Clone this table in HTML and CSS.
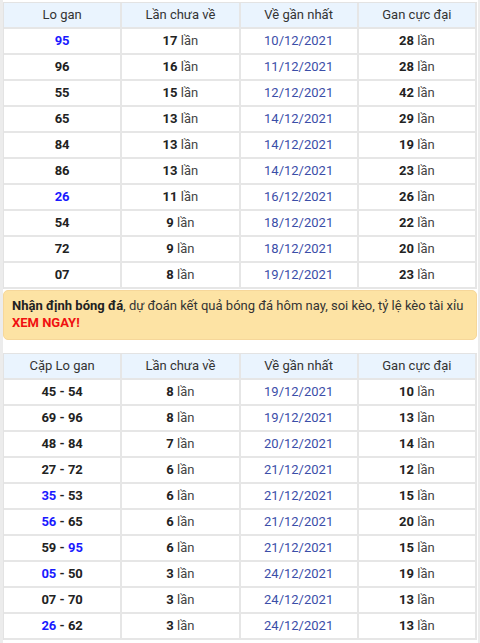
FILE: index.html
```html
<!DOCTYPE html>
<html lang="vi">
<head>
<meta charset="utf-8">
<link rel="stylesheet" href="styles.css">
</head>
<body>
<div class="wrap">
<table class="tbl">
<thead><tr><th>Lo gan</th><th>Lần chưa về</th><th>Về gần nhất</th><th>Gan cực đại</th></tr></thead>
<tbody>
<tr><td class="num blue">95</td><td><b>17</b> lần</td><td class="date">10/12/2021</td><td><b>28</b> lần</td></tr>
<tr><td class="num">96</td><td><b>16</b> lần</td><td class="date">11/12/2021</td><td><b>28</b> lần</td></tr>
<tr><td class="num">55</td><td><b>15</b> lần</td><td class="date">12/12/2021</td><td><b>42</b> lần</td></tr>
<tr><td class="num">65</td><td><b>13</b> lần</td><td class="date">14/12/2021</td><td><b>29</b> lần</td></tr>
<tr><td class="num">84</td><td><b>13</b> lần</td><td class="date">14/12/2021</td><td><b>19</b> lần</td></tr>
<tr><td class="num">86</td><td><b>13</b> lần</td><td class="date">14/12/2021</td><td><b>23</b> lần</td></tr>
<tr><td class="num blue">26</td><td><b>11</b> lần</td><td class="date">16/12/2021</td><td><b>26</b> lần</td></tr>
<tr><td class="num">54</td><td><b>9</b> lần</td><td class="date">18/12/2021</td><td><b>22</b> lần</td></tr>
<tr><td class="num">72</td><td><b>9</b> lần</td><td class="date">18/12/2021</td><td><b>20</b> lần</td></tr>
<tr><td class="num">07</td><td><b>8</b> lần</td><td class="date">19/12/2021</td><td><b>23</b> lần</td></tr>
</tbody>
</table>
<div class="banner"><b>Nhận định bóng đá</b>, dự đoán kết quả bóng đá hôm nay, soi kèo, tỷ lệ kèo tài xỉu <b class="red">XEM NGAY!</b></div>
<table class="tbl second">
<thead><tr><th>Cặp Lo gan</th><th>Lần chưa về</th><th>Về gần nhất</th><th>Gan cực đại</th></tr></thead>
<tbody>
<tr><td class="num">45 - 54</td><td><b>8</b> lần</td><td class="date">19/12/2021</td><td><b>10</b> lần</td></tr>
<tr><td class="num">69 - 96</td><td><b>8</b> lần</td><td class="date">19/12/2021</td><td><b>13</b> lần</td></tr>
<tr><td class="num">48 - 84</td><td><b>7</b> lần</td><td class="date">20/12/2021</td><td><b>14</b> lần</td></tr>
<tr><td class="num">27 - 72</td><td><b>6</b> lần</td><td class="date">21/12/2021</td><td><b>12</b> lần</td></tr>
<tr><td class="num"><span class="blue">35</span> - 53</td><td><b>6</b> lần</td><td class="date">21/12/2021</td><td><b>15</b> lần</td></tr>
<tr><td class="num"><span class="blue">56</span> - 65</td><td><b>6</b> lần</td><td class="date">21/12/2021</td><td><b>20</b> lần</td></tr>
<tr><td class="num">59 - <span class="blue">95</span></td><td><b>6</b> lần</td><td class="date">21/12/2021</td><td><b>15</b> lần</td></tr>
<tr><td class="num"><span class="blue">05</span> - 50</td><td><b>3</b> lần</td><td class="date">24/12/2021</td><td><b>19</b> lần</td></tr>
<tr><td class="num">07 - 70</td><td><b>3</b> lần</td><td class="date">24/12/2021</td><td><b>13</b> lần</td></tr>
<tr><td class="num"><span class="blue">26</span> - 62</td><td><b>3</b> lần</td><td class="date">24/12/2021</td><td><b>13</b> lần</td></tr>
</tbody>
</table>
</div>
</body>
</html>
```
FILE: styles.css
```css
html, body {
  margin: 0;
  padding: 0;
  background: #fff;
}
body {
  font-family: Roboto, "Noto Sans", "Liberation Sans", sans-serif;
  font-size: 13px;
  color: #222;
}
.wrap {
  border-left: 3px solid #ececec;
  border-right: 2px solid #ececec;
  padding: 2px 0 0 0;
  height: 643px;
  overflow: hidden;
  box-sizing: border-box;
}
.tbl {
  width: 474px;
  border-collapse: separate;
  border-spacing: 0;
  table-layout: fixed;
  border-top: 1px solid #e3e3e3;
  border-left: 1px solid #e3e3e3;
}
.tbl th, .tbl td {
  border-right: 2px solid #e6e6e6;
  border-bottom: 2px solid #e6e6e6;
  text-align: center;
  padding: 0;
}
.tbl th {
  background: #eaf4fe;
  font-weight: normal;
  color: #333;
  height: 24px;
  line-height: 24px;
}
.tbl td {
  height: 24px;
  line-height: 24px;
  color: #444;
}
.tbl td b {
  color: #222;
}
.tbl td.num {
  font-weight: bold;
  color: #222;
}
.blue, .tbl td.blue {
  color: #1a1aff;
}
.tbl td.date {
  color: #3b4ea8;
}
.banner {
  margin: 1px 0 0 0;
  width: 474px;
  box-sizing: border-box;
  background: #fde3a4;
  border: 1px solid #f6d79a;
  border-radius: 5px;
  padding: 6px 8px 8px 8px;
  line-height: 17px;
  color: #333;
}
.banner b {
  color: #222;
}
.banner .red {
  color: #f01010;
}
.second {
  margin-top: 13px;
}
```
